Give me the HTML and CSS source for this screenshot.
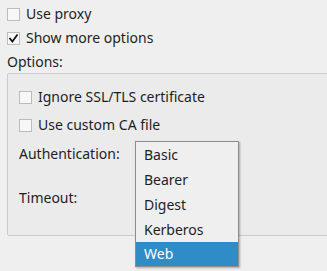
FILE: index.html
```html
<!DOCTYPE html>
<html>
<head>
<meta charset="utf-8">
<link rel="stylesheet" href="styles.css">
</head>
<body>
<div class="page">
  <div class="row check-row">
    <span class="box"></span><span class="label">Use proxy</span>
  </div>
  <div class="row check-row">
    <span class="box checked"><svg viewBox="0 0 13 13" width="13" height="13"><path d="M3 6.6 L5.4 9.6 L10 3.2" fill="none" stroke="#111" stroke-width="1.7" stroke-linecap="square"/></svg></span><span class="label">Show more options</span>
  </div>
  <div class="row">Options:</div>
  <div class="group">
    <div class="row check-row">
      <span class="box"></span><span class="label">Ignore SSL/TLS certificate</span>
    </div>
    <div class="row check-row second">
      <span class="box"></span><span class="label">Use custom CA file</span>
    </div>
    <div class="row auth">Authentication:</div>
    <div class="row timeout">Timeout:</div>
  </div>
  <ul class="popup">
    <li>Basic</li>
    <li>Bearer</li>
    <li>Digest</li>
    <li>Kerberos</li>
    <li class="selected">Web</li>
  </ul>
</div>
</body>
</html>
```

FILE: styles.css
```css
html, body {
  margin: 0;
  padding: 0;
  background: #efefef;
  overflow: hidden;
}
body {
  width: 327px;
  height: 271px;
  font-family: "Noto Sans", "DejaVu Sans", sans-serif;
  font-size: 14px;
  color: #1e1e1e;
}
.page {
  position: relative;
  padding: 2px 0 0 7px;
  height: 269px;
  overflow: hidden;
}
.row {
  height: 24px;
  line-height: 24px;
  white-space: nowrap;
}
.check-row {
  display: flex;
  align-items: center;
}
.box {
  width: 11px;
  height: 11px;
  border: 1px solid #bcbcbc;
  background: #f7f7f7;
  margin-right: 6px;
  flex: none;
  position: relative;
}
.box svg {
  position: absolute;
  left: -1px;
  top: -1px;
}
.group {
  margin-top: -1px;
  margin-right: -20px;
  border: 1px solid #cbcbcb;
  border-radius: 2px;
  background: #ebebeb;
  padding: 11px 0 25px 11px;
}
.group .second {
  margin-top: 4px;
}
.group .auth {
  margin-top: 5px;
}
.group .timeout {
  margin-top: 20px;
}
.popup {
  position: absolute;
  left: 135px;
  top: 141px;
  width: 102px;
  margin: 0;
  padding: 0;
  list-style: none;
  background: #efefef;
  border: 1px solid #8e8e8e;
  box-shadow: 1px 1px 2px rgba(0, 0, 0, 0.3);
}
.popup li {
  height: 25px;
  line-height: 25px;
  padding-left: 8px;
}
.popup li.selected {
  background: #308cc6;
  color: #ffffff;
  height: 24px;
  line-height: 24px;
}
```
